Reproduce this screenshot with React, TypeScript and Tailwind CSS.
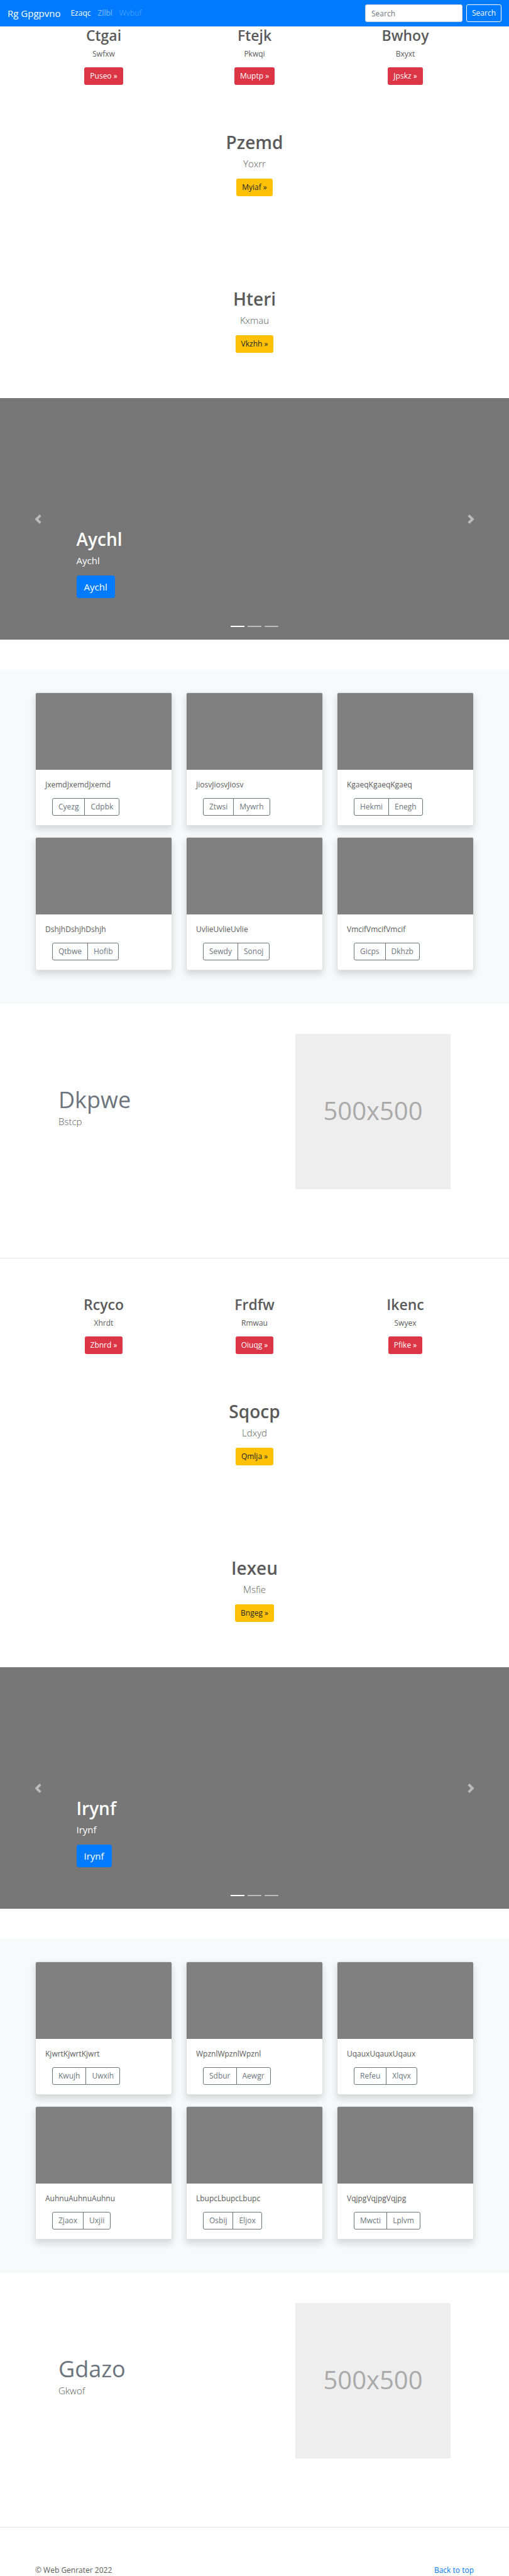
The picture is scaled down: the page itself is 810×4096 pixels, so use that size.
type Blurb = { title: string; text: string; action: string };
type CardData = { text: string; first: string; second: string };
type SectionData = {
  id: string;
  columns: Blurb[];
  banners: Blurb[];
  slide: string;
  cards: CardData[];
  feature: { title: string; text: string };
};

const sections: SectionData[] = [
  {
    id: 'one',
    columns: [
      { title: 'Ctgai', text: 'Swfxw', action: 'Puseo »' },
      { title: 'Ftejk', text: 'Pkwqi', action: 'Muptp »' },
      { title: 'Bwhoy', text: 'Bxyxt', action: 'Jpskz »' },
    ],
    banners: [
      { title: 'Pzemd', text: 'Yoxrr', action: 'Myiaf »' },
      { title: 'Hteri', text: 'Kxmau', action: 'Vkzhh »' },
    ],
    slide: 'Aychl',
    cards: [
      { text: 'JxemdJxemdJxemd', first: 'Cyezg', second: 'Cdpbk' },
      { text: 'JiosvJiosvJiosv', first: 'Ztwsi', second: 'Mywrh' },
      { text: 'KgaeqKgaeqKgaeq', first: 'Hekmi', second: 'Enegh' },
      { text: 'DshjhDshjhDshjh', first: 'Qtbwe', second: 'Hofib' },
      { text: 'UvlieUvlieUvlie', first: 'Sewdy', second: 'Sonoj' },
      { text: 'VmcifVmcifVmcif', first: 'Gicps', second: 'Dkhzb' },
    ],
    feature: { title: 'Dkpwe', text: 'Bstcp' },
  },
  {
    id: 'two',
    columns: [
      { title: 'Rcyco', text: 'Xhrdt', action: 'Zbnrd »' },
      { title: 'Frdfw', text: 'Rmwau', action: 'Oiuqg »' },
      { title: 'Ikenc', text: 'Swyex', action: 'Pfike »' },
    ],
    banners: [
      { title: 'Sqocp', text: 'Ldxyd', action: 'Qmlja »' },
      { title: 'Iexeu', text: 'Msfie', action: 'Bngeg »' },
    ],
    slide: 'Irynf',
    cards: [
      { text: 'KjwrtKjwrtKjwrt', first: 'Kwujh', second: 'Uwxih' },
      { text: 'WpznlWpznlWpznl', first: 'Sdbur', second: 'Aewgr' },
      { text: 'UqauxUqauxUqaux', first: 'Refeu', second: 'Xlqvx' },
      { text: 'AuhnuAuhnuAuhnu', first: 'Zjaox', second: 'Uxjii' },
      { text: 'LbupcLbupcLbupc', first: 'Osbij', second: 'Eljox' },
      { text: 'VqjpgVqjpgVqjpg', first: 'Mwcti', second: 'Lplvm' },
    ],
    feature: { title: 'Gdazo', text: 'Gkwof' },
  },
];

function Navbar() {
  return (
    <header className="flex h-[42px] items-center bg-[#007bff] px-3 text-white">
      <a href="#" className="mr-4 text-[15px]">Rg Gpgpvno</a>
      <nav className="flex gap-[11px]">
        <a href="#">Ezaqc</a>
        <a href="#" className="text-white/50">Zllbl</a>
        <a href="#" aria-disabled="true" className="text-white/25">Wvbuf</a>
      </nav>
      <form className="ml-auto flex gap-1.5" onSubmit={(e) => e.preventDefault()}>
        <input
          type="search"
          aria-label="Search"
          placeholder="Search"
          className="h-7 w-[155px] rounded-[3px] border border-[#ced4da] bg-white px-[9px] text-[#495057] placeholder:text-[#6c757d]"
        />
        <button type="submit" className="h-7 rounded-[3px] border border-[#f8f9fa] px-2 text-[#f8f9fa]">
          Search
        </button>
      </form>
    </header>
  );
}

function Columns({ items }: { items: Blurb[] }) {
  return (
    <div className="mx-auto grid max-w-[720px] grid-cols-3 text-center">
      {items.map((c) => (
        <div key={c.title} className="flex flex-col items-center">
          <h2 className="mb-1.5 text-[23px] leading-[29px] font-semibold">{c.title}</h2>
          <p className="mb-3">{c.text}</p>
          <a href="#" className="flex h-7 items-center rounded-[3px] bg-[#dc3545] px-[9px] text-white">{c.action}</a>
        </div>
      ))}
    </div>
  );
}

function Banner({ item }: { item: Blurb }) {
  return (
    <div className="flex flex-col items-center py-[72px] text-center">
      <h1 className="mb-1 text-[28px] leading-[38px] font-semibold">{item.title}</h1>
      <p className="mb-3 text-[15px] leading-[23px] font-light text-[#5a5a5a]">{item.text}</p>
      <a href="#" className="flex h-7 items-center rounded-[3px] bg-[#ffc107] px-[9px] text-[#212529]">{item.action}</a>
    </div>
  );
}

function Carousel({ label }: { label: string }) {
  return (
    <section aria-label={label} className="relative mb-12 flex h-96 flex-col bg-[#777] px-[15%] text-white">
      <div className="mt-auto mb-[66px]">
        <h1 className="mb-1 text-[28px] leading-[38px] font-semibold">{label}</h1>
        <p className="mb-3 text-[15px] leading-[23px]">{label}</p>
        <a href="#" className="inline-flex h-9 items-center rounded-[4px] bg-[#007bff] px-3 align-top text-[15px]">{label}</a>
      </div>
      <button type="button" aria-label="Previous" className="absolute inset-y-0 left-0 flex w-[15%] items-center justify-center opacity-50">
        <svg viewBox="0 0 8 8" className="size-[15px]" fill="#fff">
          <path d="M5.25 0l-4 4 4 4 1.5-1.5L4.25 4l2.5-2.5L5.25 0z" />
        </svg>
      </button>
      <button type="button" aria-label="Next" className="absolute inset-y-0 right-0 flex w-[15%] items-center justify-center opacity-50">
        <svg viewBox="0 0 8 8" className="size-[15px]" fill="#fff">
          <path d="M2.75 0l-1.5 1.5L3.75 4l-2.5 2.5L2.75 8l4-4-4-4z" />
        </svg>
      </button>
      <div className="absolute inset-x-0 bottom-5 flex justify-center gap-[5px]">
        <button type="button" aria-label="Slide 1" className="h-0.5 w-[22px] bg-white" />
        <button type="button" aria-label="Slide 2" className="h-0.5 w-[22px] bg-white/50" />
        <button type="button" aria-label="Slide 3" className="h-0.5 w-[22px] bg-white/50" />
      </div>
    </section>
  );
}

function Card({ card }: { card: CardData }) {
  return (
    <article className="overflow-hidden rounded-[3px] border border-[#dfdfdf] bg-white shadow-[0_6px_12px_rgba(0,0,0,0.15)]">
      <div className="h-[122px] bg-[#808080]" />
      <div className="p-[15px]">
        <p className="mb-3">{card.text}</p>
        <div className="ml-[11px] flex text-[#6c757d]">
          <button type="button" className="h-7 rounded-l-[3px] border border-[#6c757d] px-[9px]">{card.first}</button>
          <button type="button" className="-ml-px h-7 rounded-r-[3px] border border-[#6c757d] px-[9px]">{card.second}</button>
        </div>
      </div>
    </article>
  );
}

function Feature({ title, text }: { title: string; text: string }) {
  return (
    <section className="mx-auto flex max-w-[720px] justify-between px-12 pt-12 pb-[109px]">
      <div className="pt-[82px]">
        <h2 className="text-[36px] leading-[46px] text-[#6c757d]">{title}</h2>
        <p className="text-[15px] leading-[23px] font-light">{text}</p>
      </div>
      <div className="flex size-[247px] items-center justify-center bg-[#eee] pb-1 text-[40px] leading-none text-[#aaa]">
        500x500
      </div>
    </section>
  );
}

export default function App() {
  return (
    <div className="bg-white font-['Open_Sans','Noto_Sans',sans-serif] text-[12px] leading-[18px] text-[#5a5a5a]">
      <Navbar />
      <main>
        {sections.map((s) => (
          <div key={s.id}>
            <Columns items={s.columns} />
            {s.banners.map((b) => (
              <Banner key={b.title} item={b} />
            ))}
            <Carousel label={s.slide} />
            <section className="bg-[#f8f9fa] pt-9 pb-[53px]">
              <div className="mx-auto grid max-w-[720px] grid-cols-3 gap-x-[22px] gap-y-[18px] px-[11px]">
                {s.cards.map((c) => (
                  <Card key={c.text} card={c} />
                ))}
              </div>
            </section>
            <Feature title={s.feature.title} text={s.feature.text} />
            <hr className="mb-[59px] border-[#e5e5e5]" />
          </div>
        ))}
      </main>
      <footer className="mx-auto flex max-w-[720px] justify-between px-[11px]">
        <p>© Web Genrater 2022</p>
        <a href="#" className="text-[#007bff]">Back to top</a>
      </footer>
    </div>
  );
}
